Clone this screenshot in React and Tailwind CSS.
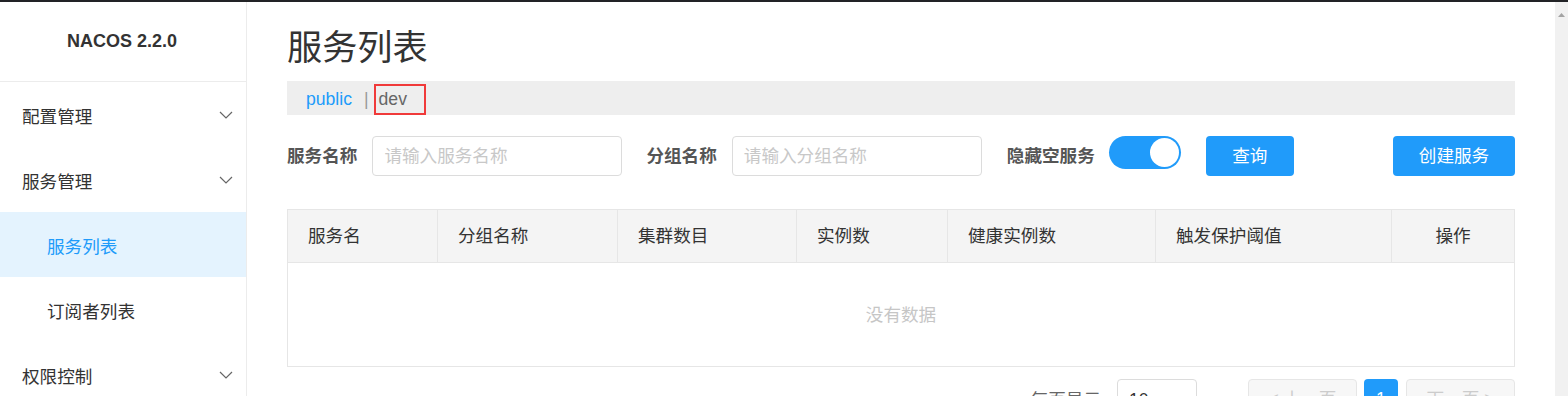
import React from "react";

const FONT = { fontFamily: '"Liberation Sans", "Noto Sans CJK SC", sans-serif' };

function Chevron() {
  return (
    <svg width="14" height="8" viewBox="0 0 14 8" className="text-[#666]">
      <polyline points="1,1 7,7 13,1" fill="none" stroke="currentColor" strokeWidth="1.2" />
    </svg>
  );
}

function MenuItem({ label, sub, active, chevron }) {
  return (
    <div
      className={`h-[65px] shrink-0 flex items-center justify-between pr-[13px] ${sub ? "pl-[47px]" : "pl-[22px]"} ${active ? "bg-[#e4f3fe] text-[#209bfa]" : "text-[#333]"}`}
    >
      <span className="text-[17.6px] pt-[6px]">{label}</span>
      {chevron && <Chevron />}
    </div>
  );
}

function Field({ label, placeholder }) {
  return (
    <div className="flex items-center">
      <span className="text-[17.6px] font-bold text-[#555] mr-[15px]">{label}</span>
      <div className="w-[250px] h-[40px] border border-[#dcdcdc] rounded-[4px] flex items-center px-[11px] text-[17.6px] text-[#c8c8c8]">
        {placeholder}
      </div>
    </div>
  );
}

export default function App() {
  const cols = ["服务名", "分组名称", "集群数目", "实例数", "健康实例数", "触发保护阈值", "操作"];
  return (
    <div className="w-[1568px] h-[396px] overflow-hidden bg-white flex flex-col" style={FONT}>
      <div className="h-[2px] bg-[#222326] shrink-0" />
      <div className="flex flex-1 min-h-0">
        {/* Sidebar */}
        <div className="w-[247px] shrink-0 border-r border-[#ececec] flex flex-col">
          <div className="h-[80px] border-b border-[#ececec] flex items-center justify-center shrink-0">
            <span className="text-[18px] font-bold text-[#333] pr-[2px]">NACOS 2.2.0</span>
          </div>
          <MenuItem label="配置管理" chevron />
          <MenuItem label="服务管理" chevron />
          <MenuItem label="服务列表" sub active />
          <MenuItem label="订阅者列表" sub />
          <MenuItem label="权限控制" chevron />
        </div>

        {/* Main */}
        <div className="flex-1 pl-[40px] pr-[40px] flex flex-col min-w-0">
          <h1 className="text-[35.2px] leading-[40px] text-[#333] mt-[26px] mb-[13px] font-normal shrink-0">服务列表</h1>
          <div className="h-[34px] shrink-0 bg-[#eeeeee] flex items-center pl-[19px] pt-[2px] text-[17.6px]">
            <span className="text-[#209bfa]">public</span>
            <span className="text-[#999] ml-[12px] mr-[5px]">|</span>
            <span className="h-[31px] mt-[1px] w-[52px] border-2 border-[#f03a3a] flex items-center pl-[3px] text-[#666]">dev</span>
          </div>

          <div className="mt-[21px] h-[40px] shrink-0 flex items-center">
            <Field label="服务名称" placeholder="请输入服务名称" />
            <div className="ml-[24px]">
              <Field label="分组名称" placeholder="请输入分组名称" />
            </div>
            <span className="ml-[25px] text-[17.6px] font-bold text-[#555]">隐藏空服务</span>
            <div className="ml-[14px] w-[72px] h-[33px] rounded-full bg-[#209bfa] relative self-start">
              <div className="absolute right-[2px] top-[2px] w-[29px] h-[29px] rounded-full bg-white" />
            </div>
            <button className="ml-[25px] w-[88px] h-[40px] rounded-[4px] bg-[#209bfa] text-white text-[17.6px]">查询</button>
            <div className="flex-1" />
            <button className="w-[122px] h-[40px] rounded-[4px] bg-[#209bfa] text-white text-[17.6px]">创建服务</button>
          </div>

          {/* Table */}
          <div className="mt-[33px] shrink-0 border border-[#e6e6e6]">
            <div className="grid grid-cols-[150px_180px_179px_151px_208px_236px_1fr] h-[53px] bg-[#f4f4f4] border-b border-[#e6e6e6]">
              {cols.map((c, i) => (
                <div
                  key={c}
                  className={`flex items-center text-[17.6px] text-[#333] ${i < cols.length - 1 ? "border-r border-[#e6e6e6]" : ""} ${i === cols.length - 1 ? "justify-center" : "pl-[20px]"}`}
                >
                  {c}
                </div>
              ))}
            </div>
            <div className="h-[103px] flex items-center justify-center text-[17.6px] text-[#c6c6c6] pt-[2px]">没有数据</div>
          </div>

          {/* Pagination */}
          <div className="mt-[12px] shrink-0 flex items-start justify-end text-[17.6px]">
            <span className="text-[#666] mt-[8px] mr-[16px]">每页显示</span>
            <div className="w-[80px] h-[40px] border border-[#dcdcdc] rounded-[4px] pl-[11px] pt-[7px] text-[#333]">10</div>
            <div className="ml-[51px] w-[109px] h-[40px] border border-[#e6e6e6] bg-[#f7f7f7] rounded-[4px] flex items-center justify-center text-[#ccc]">&lt; 上一页</div>
            <div className="ml-[7px] w-[34px] h-[40px] rounded-[4px] bg-[#209bfa] text-white flex items-center justify-center">1</div>
            <div className="ml-[8px] w-[109px] h-[40px] border border-[#e6e6e6] bg-[#f7f7f7] rounded-[4px] flex items-center justify-center text-[#ccc]">下一页 &gt;</div>
          </div>
        </div>

        {/* Scrollbar */}
        <div className="w-[13px] shrink-0 bg-[#f1f1f1] flex justify-center pt-[11px]">
          <svg width="7" height="4" viewBox="0 0 7 4">
            <polygon points="3.5,0 7,4 0,4" fill="#a3a3a3" />
          </svg>
        </div>
      </div>
    </div>
  );
}
